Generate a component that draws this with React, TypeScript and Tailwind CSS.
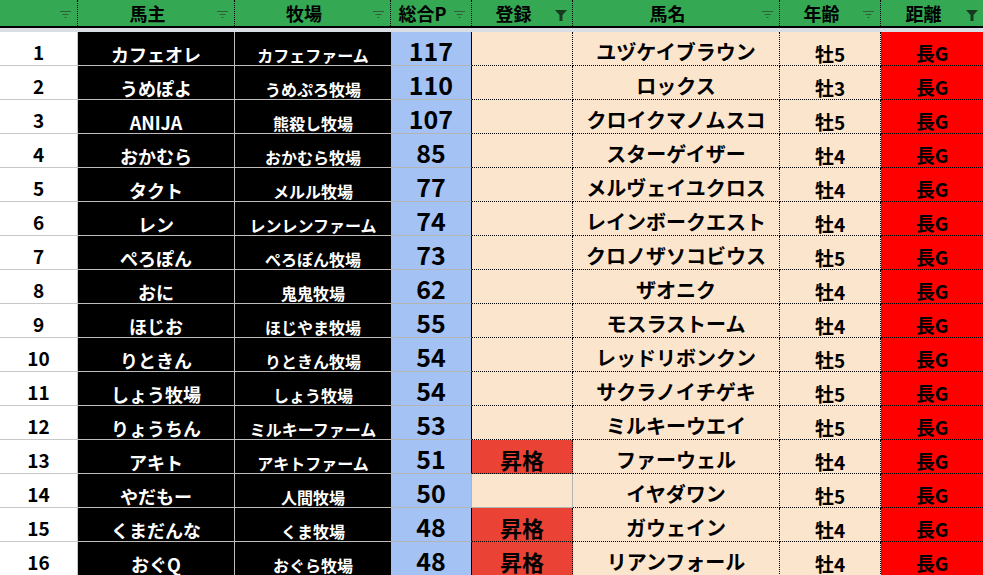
import React from 'react';

type Row = {
  no: number;
  owner: string;
  farm: string;
  points: number;
  promo: boolean;
  horse: string;
  age: string;
  dist: string;
};

const rows: Row[] = [
  { no: 1, owner: 'カフェオレ', farm: 'カフェファーム', points: 117, promo: false, horse: 'ユヅケイブラウン', age: '牡5', dist: '長G' },
  { no: 2, owner: 'うめぽよ', farm: 'うめぷろ牧場', points: 110, promo: false, horse: 'ロックス', age: '牡3', dist: '長G' },
  { no: 3, owner: 'ANIJA', farm: '熊殺し牧場', points: 107, promo: false, horse: 'クロイクマノムスコ', age: '牡5', dist: '長G' },
  { no: 4, owner: 'おかむら', farm: 'おかむら牧場', points: 85, promo: false, horse: 'スターゲイザー', age: '牡4', dist: '長G' },
  { no: 5, owner: 'タクト', farm: 'メルル牧場', points: 77, promo: false, horse: 'メルヴェイユクロス', age: '牡4', dist: '長G' },
  { no: 6, owner: 'レン', farm: 'レンレンファーム', points: 74, promo: false, horse: 'レインボークエスト', age: '牡4', dist: '長G' },
  { no: 7, owner: 'ぺろぽん', farm: 'ぺろぽん牧場', points: 73, promo: false, horse: 'クロノザソコビウス', age: '牡5', dist: '長G' },
  { no: 8, owner: 'おに', farm: '鬼鬼牧場', points: 62, promo: false, horse: 'ザオニク', age: '牡4', dist: '長G' },
  { no: 9, owner: 'ほじお', farm: 'ほじやま牧場', points: 55, promo: false, horse: 'モスラストーム', age: '牡4', dist: '長G' },
  { no: 10, owner: 'りときん', farm: 'りときん牧場', points: 54, promo: false, horse: 'レッドリボンクン', age: '牡5', dist: '長G' },
  { no: 11, owner: 'しょう牧場', farm: 'しょう牧場', points: 54, promo: false, horse: 'サクラノイチゲキ', age: '牡5', dist: '長G' },
  { no: 12, owner: 'りょうちん', farm: 'ミルキーファーム', points: 53, promo: false, horse: 'ミルキーウエイ', age: '牡5', dist: '長G' },
  { no: 13, owner: 'アキト', farm: 'アキトファーム', points: 51, promo: true, horse: 'ファーウェル', age: '牡4', dist: '長G' },
  { no: 14, owner: 'やだもー', farm: '人間牧場', points: 50, promo: false, horse: 'イヤダワン', age: '牡5', dist: '長G' },
  { no: 15, owner: 'くまだんな', farm: 'くま牧場', points: 48, promo: true, horse: 'ガウェイン', age: '牡4', dist: '長G' },
  { no: 16, owner: 'おぐQ', farm: 'おぐら牧場', points: 48, promo: true, horse: 'リアンフォール', age: '牡4', dist: '長G' },
];

const headers: { label: string; funnel?: boolean }[] = [
  { label: '' },
  { label: '馬主' },
  { label: '牧場' },
  { label: '総合P' },
  { label: '登録', funnel: true },
  { label: '馬名' },
  { label: '年齢' },
  { label: '距離', funnel: true },
];

const grid = 'grid grid-cols-[78px_157px_156px_81px_101px_207px_101px_102px]';

function FilterIcon() {
  return (
    <svg width="12" height="8" viewBox="0 0 12 8" className="mt-[3px]">
      <path d="M0 0.5H11M2.5 3.5H8.5M4.5 6.5H6.5" stroke="#2c4a33" strokeOpacity="0.75" strokeWidth="1" />
    </svg>
  );
}

function FunnelIcon() {
  return (
    <svg width="12" height="11" viewBox="0 0 12 11" className="mt-[4px]">
      <path d="M0 0H12L7.5 5V11H4.5V5Z" fill="#173a20" />
    </svg>
  );
}

export default function App() {
  return (
    <div className="w-[983px] h-[575px] overflow-hidden bg-white font-['Noto_Sans_CJK_JP','Noto_Sans',sans-serif] font-bold">
      {/* ヘッダー */}
      <div className={`${grid} h-[26px] bg-[#35a853]`}>
        {headers.map((h, i) => (
          <div
            key={i}
            className={`flex items-center h-full ${i < headers.length - 1 ? 'border-r border-dotted border-black' : ''}`}
          >
            <span className="flex-1 text-center text-[18px] leading-none text-black">{h.label}</span>
            <span className="w-3 mr-[5px] flex justify-center">{h.funnel ? <FunnelIcon /> : <FilterIcon />}</span>
          </div>
        ))}
      </div>
      <div className="h-[2px] bg-black" />
      <div className="h-[4px] bg-[#d9dde4]" />

      {/* 本体 */}
      {rows.map((r) => (
        <div key={r.no} className={`${grid} h-[34px]`}>
          <div className="flex items-end justify-center pb-[4px] bg-white border-r border-b border-[#c8c8c8] text-[19px] leading-none text-black">
            {r.no}
          </div>
          <div className="flex items-end justify-center pb-[2px] bg-black border-r border-b border-[#bdbdbd] text-[18px] leading-none text-white">
            {r.owner}
          </div>
          <div className="flex items-end justify-center pb-[2px] bg-black border-b border-[#bdbdbd] text-[16px] leading-none text-white">
            {r.farm}
          </div>
          <div
            className={`flex items-end justify-center pb-[2px] bg-[#a4c2f4] border-b border-[#b4b4b4] text-[25px] leading-none text-black border-r ${
              r.no === 14 ? 'border-r-[#b4b4b4]' : 'border-r-black border-r-dotted'
            }`}
          >
            {r.points}
          </div>
          <div
            className={`flex items-end justify-center pb-[3px] text-[22px] leading-none text-black border-r border-b ${
              r.promo ? 'bg-[#ea4335]' : 'bg-[#fce5cd]'
            } ${r.no === 14 ? 'border-[#b4b4b4]' : 'border-dotted border-black'}`}
          >
            {r.promo ? '昇格' : ''}
          </div>
          <div className="flex items-end justify-center pb-[3px] bg-[#fce5cd] border-r border-b border-dotted border-black text-[20px] leading-none text-black">
            {r.horse}
          </div>
          <div className="flex items-end justify-center pb-[2px] bg-[#fce5cd] border-r border-b border-dotted border-black text-[19px] leading-none text-black">
            {r.age}
          </div>
          <div className="flex items-end justify-center pb-[3px] bg-[#ff0000] border-b border-dotted border-black text-[19px] leading-none text-black">
            {r.dist}
          </div>
        </div>
      ))}
    </div>
  );
}
